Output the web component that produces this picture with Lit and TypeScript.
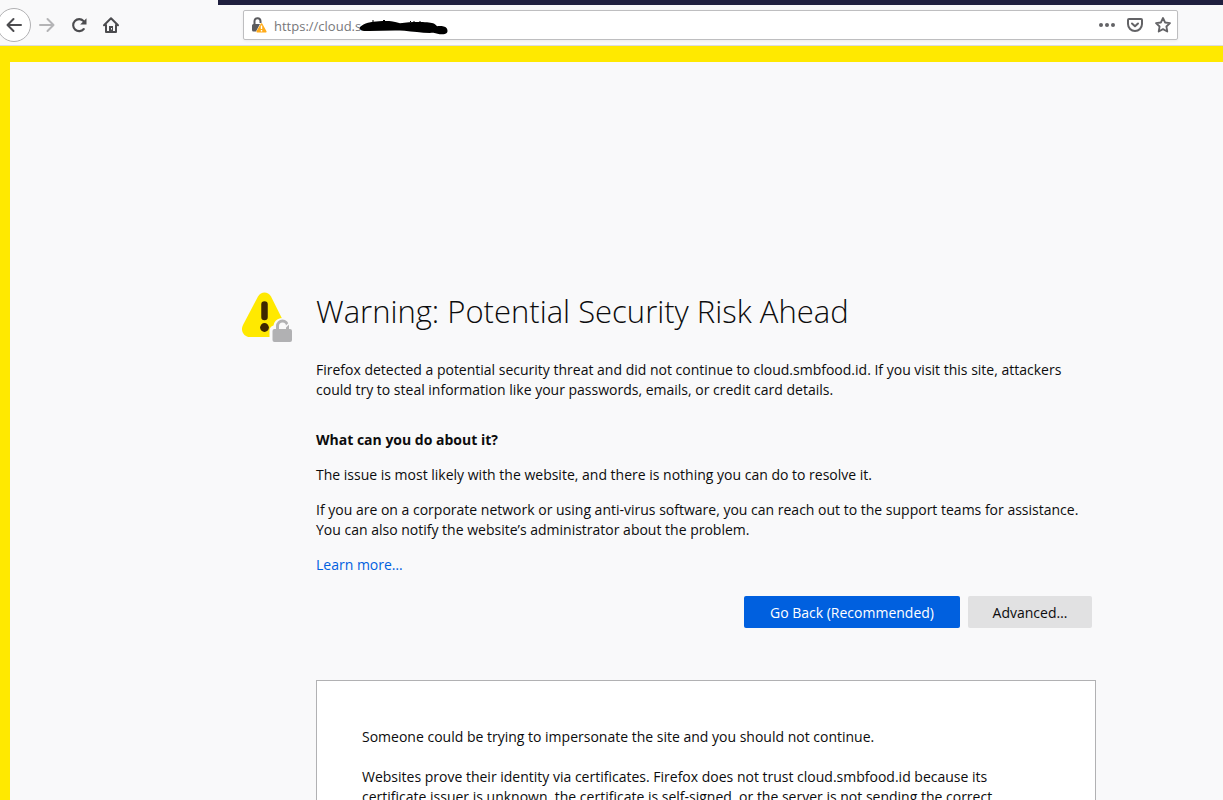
import { LitElement, html, css } from "lit";
import { customElement } from "lit/decorators.js";

@customElement("browser-toolbar")
class BrowserToolbar extends LitElement {
  static styles = css`
    :host {
      display: block;
      position: relative;
      background: #f9f9fa;
      border-bottom: 1px solid #dcdcde;
    }
    .tabs {
      height: 5px;
      margin-left: 218px;
      background: #20203f;
    }
    .bar {
      display: flex;
      align-items: center;
      height: 40px;
      padding-right: 45px;
    }
    button {
      display: flex;
      align-items: center;
      justify-content: center;
      width: 32px;
      height: 32px;
      padding: 0;
      border: 0;
      background: none;
      color: #4c4c4f;
    }
    button:disabled {
      color: #b4b4b6;
    }
    .nav {
      display: flex;
      align-items: center;
      width: 243px;
      flex: none;
    }
    .nav .back {
      box-sizing: border-box;
      width: 34px;
      height: 34px;
      margin-left: -3px;
      border: 1px solid #b1b1b3;
      border-radius: 50%;
      background: #fff;
    }
    svg {
      display: block;
      overflow: visible;
    }
    .address {
      box-sizing: border-box;
      display: flex;
      align-items: center;
      flex: 1;
      min-width: 0;
      height: 30px;
      border: 1px solid #bebec0;
      border-radius: 2px;
      background: #fff;
      box-shadow: 0 1px 3px rgba(0, 0, 0, 0.06);
    }
    .address .identity {
      width: 30px;
      height: 28px;
    }
    .field {
      position: relative;
      flex: 1;
      min-width: 0;
    }
    input {
      display: block;
      box-sizing: border-box;
      width: 100%;
      height: 28px;
      padding: 2px 0 0;
      border: 0;
      outline: 0;
      background: none;
      color: #77777a;
      font: 13px/26px "Open Sans", "Noto Sans", sans-serif;
    }
    .scribble {
      position: absolute;
      left: 85px;
      top: 8px;
    }
    .actions {
      display: flex;
    }
    .actions button {
      width: 28px;
      height: 28px;
      color: #636366;
    }
  `;

  render() {
    return html`
      <div class="tabs"></div>
      <div class="bar">
        <nav class="nav">
          <button class="back" aria-label="Back">
            <svg width="16" height="16" viewBox="0 0 16 16" fill="none" stroke="currentColor" stroke-width="2" stroke-linecap="round" stroke-linejoin="round">
              <path d="M15 8H1.500M7.500 2l-6 6 6 6" />
            </svg>
          </button>
          <button disabled aria-label="Forward">
            <svg width="16" height="16" viewBox="0 0 16 16" fill="none" stroke="currentColor" stroke-width="2" stroke-linecap="round" stroke-linejoin="round">
              <path d="M1 8h13.500M8.500 2l6 6-6 6" />
            </svg>
          </button>
          <button aria-label="Reload">
            <svg width="16" height="16" viewBox="0 0 16 16">
              <path d="M12.800 12A6 6 0 1 1 12.500 4" fill="none" stroke="currentColor" stroke-width="2.100" stroke-linecap="round" />
              <path d="M15.500 1.200v6.300H9.200z" fill="currentColor" />
            </svg>
          </button>
          <button aria-label="Home">
            <svg width="16" height="16" viewBox="0 0 16 16" fill="none" stroke="currentColor" stroke-width="2" stroke-linecap="round" stroke-linejoin="round">
              <path d="M1 8.200L8 1.200l7 7M3 8v7h10V8" />
              <path d="M6 15V9h4v6z" fill="currentColor" stroke="none" />
              <path d="M8.500 11v1.500" stroke="#f9f9fa" stroke-width="1" stroke-linecap="butt" />
            </svg>
          </button>
        </nav>
        <div class="address">
          <button class="identity" aria-label="Site information">
            <svg width="16" height="16" viewBox="0 0 16 16">
              <path d="M3.500 8V4.500a3 3 0 0 1 6-.5V6" fill="none" stroke="#5b5b5e" stroke-width="2" />
              <path d="M2.500 7H9L5 14.500H2.500A1.500 1.500 0 0 1 1 13V8.500A1.500 1.500 0 0 1 2.500 7z" fill="#5b5b5e" />
              <path d="M10.500 7L14.800 14.700H6.200z" fill="#ffab1a" stroke="#ffab1a" stroke-width="1.600" stroke-linejoin="round" />
              <path d="M10.500 8.500v3.500M10.500 13v1.400" stroke="#fff" stroke-width="1.400" />
            </svg>
          </button>
          <div class="field">
            <input aria-label="Address" value="https://cloud.s" />
            <svg class="scribble" width="90" height="16" viewBox="0 0 90 16" aria-hidden="true">
              <path d="M1 8C5 4 12 2.500 20 2.200c9-.5 14-.2 21 2 9-1.500 20-1.500 27-1 5 .5 8 1 10 4 4-.3 8 0 9.500 1.800 2 3 1 6-3 6.300-4 .4-7-1-10-1.500-9 .5-20-1-29-2-13-.8-26 .5-39 .2C2.500 12 0 10.500 1 8z" fill="#000" />
              <path d="M13 2h2M24 1.500h2M51 2.500h1M55 3V2M61 3V2" stroke="#000" stroke-width="1" />
            </svg>
          </div>
          <div class="actions">
            <button aria-label="Page actions">
              <svg width="16" height="16" viewBox="0 0 16 16" fill="currentColor">
                <circle cx="2" cy="8" r="2" /><circle cx="8" cy="8" r="2" /><circle cx="14" cy="8" r="2" />
              </svg>
            </button>
            <button aria-label="Save to Pocket">
              <svg width="16" height="16" viewBox="0 0 16 16" fill="none" stroke="currentColor" stroke-width="2" stroke-linecap="round" stroke-linejoin="round">
                <path d="M2 2h12a1 1 0 0 1 1 1v4a7 7 0 0 1-14 0V3a1 1 0 0 1 1-1z" />
                <path d="M5 6.500L8 9.300l3-2.800" />
              </svg>
            </button>
            <button aria-label="Bookmark this page">
              <svg width="16" height="16" viewBox="0 0 16 16" fill="none" stroke="currentColor" stroke-width="1.800" stroke-linejoin="round">
                <path d="M8 1l2.100 4.500 4.900.6-3.600 3.400.9 5L8 12.100l-4.300 2.400.9-5L1 6.100l4.900-.6z" />
              </svg>
            </button>
          </div>
        </div>
      </div>
    `;
  }
}

@customElement("app-root")
class AppRoot extends LitElement {
  static styles = css`
    :host {
      display: flex;
      flex-direction: column;
      height: 100vh;
      overflow: hidden;
      background: #f9f9fa;
      color: #0c0c0d;
      font: 14px/20px "Open Sans", "Noto Sans", sans-serif;
    }
    browser-toolbar {
      flex: none;
    }
    main {
      flex: 1;
      min-height: 0;
      overflow: hidden;
      border-top: 16px solid #ffe900;
      border-left: 10px solid #ffe900;
    }
    .page {
      display: grid;
      grid-template-columns: 52px minmax(0, 780px);
      column-gap: 22px;
      padding: 228px 24px 0 232px;
    }
    .symbol {
      display: block;
      margin-top: 1px;
    }
    h1 {
      margin: 0 0 28px;
      font-size: 31px;
      line-height: 42px;
      font-weight: 300;
    }
    h2 {
      margin: 30px 0 15px;
      font-size: 14px;
      line-height: 20px;
      font-weight: 700;
    }
    p {
      margin: 0 0 15px;
    }
    a {
      color: #0060df;
      text-decoration: none;
    }
    .buttons {
      display: flex;
      justify-content: flex-end;
      gap: 8px;
      margin: 21px 4px 52px 0;
    }
    .buttons button {
      height: 32px;
      min-width: 124px;
      padding: 2px 22px 0;
      border: 0;
      border-radius: 2px;
      background: #e1e1e2;
      color: inherit;
      font: inherit;
    }
    .buttons .primary {
      min-width: 216px;
      background: #0060df;
      color: #fff;
    }
    .details {
      padding: 46px 45px;
      border: 1px solid #b1b1b3;
      background: #fff;
    }
    .details p {
      margin-bottom: 20px;
    }
  `;

  render() {
    return html`
      <browser-toolbar></browser-toolbar>
      <main>
        <div class="page">
          <svg class="symbol" width="52" height="52" viewBox="0 0 52 52" aria-hidden="true">
            <path d="M16 5.500C19 0 26 0 29 5.500l14 28C46 40 42 46 36 46H8C2 46-2 40 1 34z" fill="#ffe900" />
            <path d="M22.500 13.500v12.500" stroke="#3e2800" stroke-width="6.500" stroke-linecap="round" />
            <circle cx="22.500" cy="36.500" r="4.400" fill="#3e2800" />
            <path d="M27.500 52V39q0-3 4-4.500a9 9 0 0 1 16-4l5 5V52z" fill="#f9f9fa" />
            <path d="M35.500 39v-4a5 5 0 0 1 10 0v4" fill="none" stroke="#b1b1b3" stroke-width="3" />
            <path d="M42 37.500l6.500-6.500" stroke="#f9f9fa" stroke-width="1.600" />
            <rect x="30.500" y="38" width="19.500" height="13" rx="2" fill="#b1b1b3" />
          </svg>
          <div>
            <h1>Warning: Potential Security Risk Ahead</h1>
            <p>
              Firefox detected a potential security threat and did not continue to cloud.smbfood.id. If you visit this site, attackers<br />
              could try to steal information like your passwords, emails, or credit card details.
            </p>
            <h2>What can you do about it?</h2>
            <p>The issue is most likely with the website, and there is nothing you can do to resolve it.</p>
            <p>
              If you are on a corporate network or using anti-virus software, you can reach out to the support teams for assistance.<br />
              You can also notify the website’s administrator about the problem.
            </p>
            <p><a href="#learn-more">Learn more…</a></p>
            <div class="buttons">
              <button class="primary">Go Back (Recommended)</button>
              <button>Advanced…</button>
            </div>
            <section class="details">
              <p>Someone could be trying to impersonate the site and you should not continue.</p>
              <p>
                Websites prove their identity via certificates. Firefox does not trust cloud.smbfood.id because its<br />
                certificate issuer is unknown, the certificate is self-signed, or the server is not sending the correct
              </p>
            </section>
          </div>
        </div>
      </main>
    `;
  }
}
